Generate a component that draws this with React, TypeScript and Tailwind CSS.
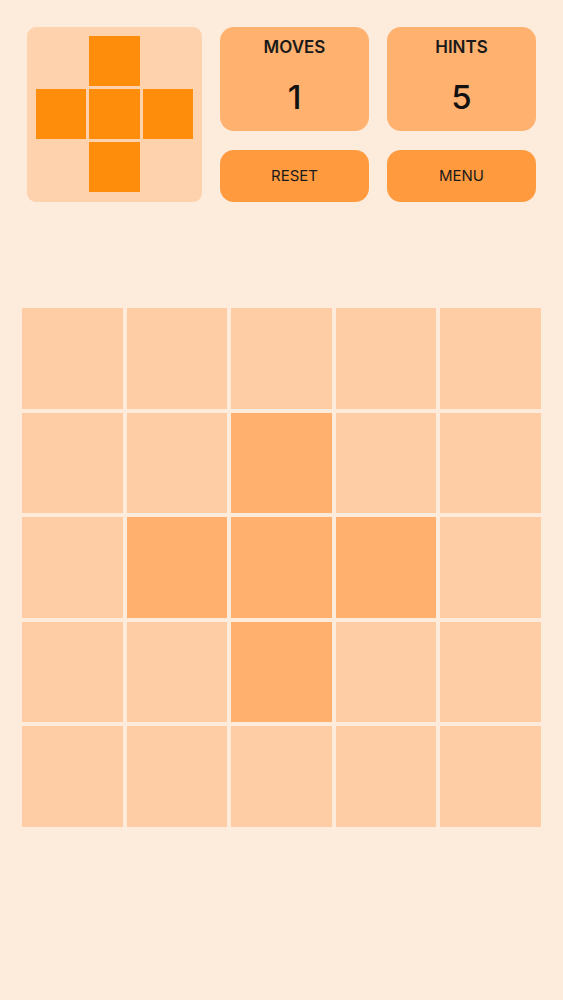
import React from "react";

const target = [
    [0, 1, 0],
    [1, 1, 1],
    [0, 1, 0],
];

const board = [
    [0, 0, 0, 0, 0],
    [0, 0, 1, 0, 0],
    [0, 1, 1, 1, 0],
    [0, 0, 1, 0, 0],
    [0, 0, 0, 0, 0],
];

function StatCard({ label, value }: { label: string; value: number }) {
    return (
        <div className="flex h-[104px] flex-1 flex-col items-center rounded-[14px] bg-[#ffb16f] pt-[9px]">
            <span className="text-[17px] font-semibold leading-[22px] text-[#1a1a1a]">{label}</span>
            <span className="mt-[19px] text-[33px] font-medium leading-[40px] text-[#111]">{value}</span>
        </div>
    );
}

function ActionButton({ label }: { label: string }) {
    return (
        <button className="flex h-[52px] flex-1 items-center justify-center rounded-[14px] bg-[#ff9a3f] text-[15px] text-[#1a1a1a]">
            {label}
        </button>
    );
}

export default function App() {
    return (
        <div
            className="min-h-[1000px] w-full bg-[#fdebdc]"
            style={{ fontFamily: "Inter, 'Liberation Sans', sans-serif" }}
        >
            <div className="flex gap-[18px] px-[27px] pt-[27px]">
                <div className="h-[175px] w-[175px] shrink-0 rounded-[9px] bg-[#fed2ac] p-[9px]">
                    <div className="grid grid-cols-3 gap-[3px]">
                        {target.flat().map((on, i) => (
                            <div
                                key={i}
                                className={on ? "h-[50px] bg-[#ff8d0c]" : "h-[50px]"}
                            />
                        ))}
                    </div>
                </div>
                <div className="flex flex-1 flex-col gap-[19px]">
                    <div className="flex gap-[18px]">
                        <StatCard label="MOVES" value={1} />
                        <StatCard label="HINTS" value={5} />
                    </div>
                    <div className="flex gap-[18px]">
                        <ActionButton label="RESET" />
                        <ActionButton label="MENU" />
                    </div>
                </div>
            </div>

            <div className="mt-[106px] grid grid-cols-5 gap-[4px] px-[22px]">
                {board.flat().map((on, i) => (
                    <div
                        key={i}
                        className={`h-[100.5px] ${on ? "bg-[#ffb06e]" : "bg-[#fecda5]"}`}
                    />
                ))}
            </div>
        </div>
    );
}
